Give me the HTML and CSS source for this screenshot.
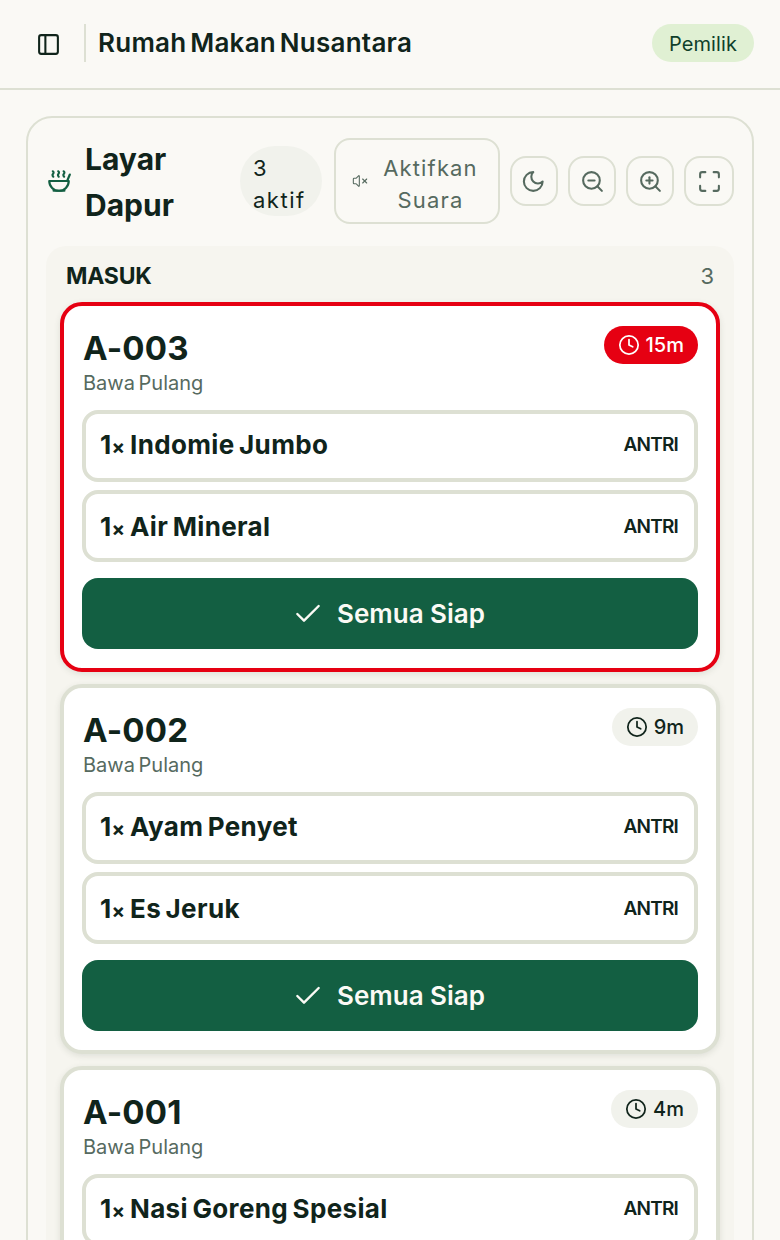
FILE: index.html
```html
<!DOCTYPE html>
<html lang="id">
<head>
<meta charset="utf-8">
<title>Layar Dapur</title>
<link rel="stylesheet" href="styles.css">
</head>
<body>
<svg class="sprite" aria-hidden="true">
  <symbol id="i-panel" viewBox="0 0 24 24"><rect x="3" y="3" width="18" height="18" rx="2"/><path d="M9 3v18"/></symbol>
  <symbol id="i-soup" viewBox="0 0 24 24"><path d="M12 21a9 9 0 0 0 9-9H3a9 9 0 0 0 9 9Z"/><path d="M7 21h10"/><path d="M19.5 12 22 6"/><path d="M16.25 3c.27.1.8.53.75 1.36-.06.83-.93 1.2-1 2.02-.05.78.34 1.24.73 1.62"/><path d="M11.25 3c.27.1.8.53.74 1.36-.05.83-.93 1.2-.98 2.02-.06.78.33 1.24.72 1.62"/><path d="M6.25 3c.27.1.8.53.75 1.36-.06.83-.93 1.2-1 2.02-.05.78.34 1.24.74 1.62"/></symbol>
  <symbol id="i-mute" viewBox="0 0 24 24"><path d="M11 4.702a.705.705 0 0 0-1.203-.498L6.413 7.587A1.4 1.4 0 0 1 5.416 8H3a1 1 0 0 0-1 1v6a1 1 0 0 0 1 1h2.416a1.4 1.4 0 0 1 .997.413l3.383 3.384A.705.705 0 0 0 11 19.298z"/><path d="M22 9l-6 6"/><path d="M16 9l6 6"/></symbol>
  <symbol id="i-moon" viewBox="1.2 0 24 24"><path d="M12 3a6 6 0 0 0 9 9 9 9 0 1 1-9-9Z"/></symbol>
  <symbol id="i-zoomout" viewBox="0 0 24 24"><circle cx="11" cy="11" r="8"/><path d="M21 21l-4.35-4.35"/><path d="M8 11h6"/></symbol>
  <symbol id="i-zoomin" viewBox="0 0 24 24"><circle cx="11" cy="11" r="8"/><path d="M21 21l-4.35-4.35"/><path d="M11 8v6"/><path d="M8 11h6"/></symbol>
  <symbol id="i-max" viewBox="0 0 24 24"><path d="M8 3H5a2 2 0 0 0-2 2v3"/><path d="M21 8V5a2 2 0 0 0-2-2h-3"/><path d="M3 16v3a2 2 0 0 0 2 2h3"/><path d="M16 21h3a2 2 0 0 0 2-2v-3"/></symbol>
  <symbol id="i-clock" viewBox="0 0 24 24"><circle cx="12" cy="12" r="10"/><path d="M12 6v6l4 2"/></symbol>
  <symbol id="i-check" viewBox="0 0 24 24"><path d="M20 6 9 17l-5-5"/></symbol>
</svg>
<div class="page">
  <header class="topbar">
    <div class="topbar-left">
      <button class="sidebar-toggle" type="button"><svg class="icon icon-25"><use href="#i-panel"/></svg></button>
      <span class="divider"></span>
      <h1 class="brand">Rumah Makan Nusantara</h1>
    </div>
    <span class="role">Pemilik</span>
  </header>
  <main class="main">
    <section class="panel">
      <div class="panel-head">
        <svg class="icon icon-soup"><use href="#i-soup"/></svg>
        <h2 class="panel-title">Layar Dapur</h2>
        <span class="count">3 aktif</span>
        <button class="sound" type="button"><svg class="icon icon-mute"><use href="#i-mute"/></svg><span class="sound-label">Aktifkan Suara</span></button>
        <button class="tool" type="button"><svg class="icon icon-25"><use href="#i-moon"/></svg></button>
        <button class="tool" type="button"><svg class="icon icon-25"><use href="#i-zoomout"/></svg></button>
        <button class="tool" type="button"><svg class="icon icon-25"><use href="#i-zoomin"/></svg></button>
        <button class="tool tool-wide" type="button"><svg class="icon icon-25"><use href="#i-max"/></svg></button>
      </div>
      <div class="column">
        <div class="column-head"><span class="column-name">MASUK</span><span class="column-count">3</span></div>
        <div class="cards">
          <article class="card card-late">
            <div class="card-head">
              <div class="order"><div class="order-no">A-003</div><div class="order-type">Bawa Pulang</div></div>
              <span class="timer timer-late"><svg class="icon icon-timer"><use href="#i-clock"/></svg>15m</span>
            </div>
            <div class="items">
              <div class="item"><span class="item-name">1<span class="times">×</span> Indomie Jumbo</span><span class="item-status">ANTRI</span></div>
              <div class="item"><span class="item-name">1<span class="times">×</span> Air Mineral</span><span class="item-status">ANTRI</span></div>
            </div>
            <button class="ready" type="button"><svg class="icon icon-check"><use href="#i-check"/></svg>Semua Siap</button>
          </article>
          <article class="card">
            <div class="card-head">
              <div class="order"><div class="order-no">A-002</div><div class="order-type">Bawa Pulang</div></div>
              <span class="timer"><svg class="icon icon-timer"><use href="#i-clock"/></svg>9m</span>
            </div>
            <div class="items">
              <div class="item"><span class="item-name">1<span class="times">×</span> Ayam Penyet</span><span class="item-status">ANTRI</span></div>
              <div class="item"><span class="item-name">1<span class="times">×</span> Es Jeruk</span><span class="item-status">ANTRI</span></div>
            </div>
            <button class="ready" type="button"><svg class="icon icon-check"><use href="#i-check"/></svg>Semua Siap</button>
          </article>
          <article class="card">
            <div class="card-head">
              <div class="order"><div class="order-no">A-001</div><div class="order-type">Bawa Pulang</div></div>
              <span class="timer"><svg class="icon icon-timer"><use href="#i-clock"/></svg>4m</span>
            </div>
            <div class="items">
              <div class="item"><span class="item-name">1<span class="times">×</span> Nasi Goreng Spesial</span><span class="item-status">ANTRI</span></div>
            </div>
          </article>
        </div>
      </div>
    </section>
  </main>
</div>
</body>
</html>
```
FILE: styles.css
```css
* { box-sizing: border-box; }
html, body { margin: 0; padding: 0; }
body {
  background: #faf9f5;
  color: #10241b;
  font-family: "Inter", "Liberation Sans", sans-serif;
}
button { font-family: inherit; background: none; border: 0; padding: 0; color: inherit; }
h1, h2 { margin: 0; }
.sprite { display: none; }
.page { width: 780px; height: 1240px; overflow: hidden; }

.icon { display: block; fill: none; stroke: currentColor; stroke-width: 2; stroke-linecap: round; stroke-linejoin: round; flex: none; }
.icon-25 { width: 25px; height: 25px; }
.icon-soup { width: 26px; height: 26px; color: #135f42; }
.icon-mute { width: 16px; height: 16px; stroke-width: 1.6; }
.icon-timer { width: 22px; height: 22px; stroke-width: 1.9; }
.icon-check { width: 32px; height: 32px; stroke-width: 1.8; }

.topbar {
  height: 90px;
  border-bottom: 2px solid #dde0d3;
  display: flex;
  align-items: center;
  justify-content: space-between;
  padding: 0 26px 2px 36px;
}
.topbar-left { display: flex; align-items: center; }
.sidebar-toggle { display: flex; width: 25px; height: 25px; margin-top: 2px; }
.divider { width: 2px; height: 38px; background: #dde0d3; margin: 0 12px 0 23px; }
.brand { font-size: 26px; line-height: 36px; font-weight: 600; letter-spacing: 0.25px; word-spacing: -3px; white-space: nowrap; }
.role {
  width: 102px; height: 38px;
  border-radius: 19px;
  background: #e0f0d3;
  color: #0f3f2b;
  font-size: 20px;
  line-height: 41px;
  letter-spacing: 0.1px;
  text-align: center;
}

.main { padding: 26px 26px 0; }
.panel { border: 2px solid #dde0d3; border-radius: 26px; padding: 19px 18px; height: 1200px; }
.panel-head { display: flex; align-items: center; height: 88px; }
.panel-head .icon-soup { margin-left: 0; margin-right: 13px; }
.panel-title { width: 155px; margin-top: 2px; font-size: 30px; line-height: 46px; font-weight: 700; }
.count {
  width: 82px; height: 70px;
  padding: 6px 13px;
  border-radius: 35px;
  background: #f1f2ec;
  font-size: 22px;
  line-height: 32px;
  letter-spacing: 1.5px;
}
.sound {
  width: 166px; height: 86px;
  margin: 0 10px 0 12px;
  border: 2px solid #dde0d3;
  border-radius: 16px;
  display: flex;
  align-items: center;
  padding: 0 16px;
  gap: 11px;
  color: #566a5f;
}
.sound-label { padding-top: 6px; font-size: 22px; line-height: 32px; text-align: center; letter-spacing: 1.15px; font-weight: 400; }
.tool {
  width: 48px; height: 50px;
  margin-right: 10px;
  border: 2px solid #dde0d3;
  border-radius: 16px;
  display: flex;
  align-items: center;
  justify-content: center;
  color: #566a5f;
  flex: none;
}
.tool-wide { width: 50px; margin-right: 0; }

.column { margin-top: 21px; background: #f6f5ef; border-radius: 20px; padding: 14px 14px 0; }
.column-head { display: flex; justify-content: space-between; align-items: center; height: 28px; padding: 6px 6px 2px; }
.column-name { font-size: 23px; font-weight: 700; letter-spacing: -0.2px; }
.column-count { font-size: 22px; color: #566a5f; }
.cards { display: flex; flex-direction: column; gap: 12px; margin-top: 14px; }

.card {
  height: 370px;
  padding: 20px 18px;
  background: #fff;
  border: 4px solid #dde0d3;
  border-radius: 22px;
  box-shadow: 0 2px 6px rgba(60, 70, 50, 0.12);
}
.card-late { border-color: #e60012; }
.card-head { display: flex; justify-content: space-between; align-items: flex-start; height: 84px; }
.order { padding-left: 1px; }
.order-no { font-size: 33px; line-height: 44px; font-weight: 700; letter-spacing: 0.2px; }
.order-type { font-size: 20px; line-height: 26px; color: #566a5f; word-spacing: -2px; }
.timer {
  display: flex; align-items: center; gap: 6px;
  height: 38px;
  padding: 0 14px;
  border-radius: 19px;
  background: #f1f2ec;
  font-size: 20px;
  font-weight: 500;
}
.timer-late { background: #e60012; color: #fff; }
.items { display: flex; flex-direction: column; gap: 8px; }
.item {
  height: 72px;
  padding: 0 16px 0 14px;
  border: 4px solid #dde0d3;
  border-radius: 16px;
  display: flex;
  align-items: center;
  justify-content: space-between;
  background: #fff;
}
.item + .item { padding-top: 4px; }
.item-name { font-size: 26px; line-height: 34px; font-weight: 700; word-spacing: -2px; letter-spacing: 0.35px; }
.times { font-size: 20px; }
.item-status { margin-bottom: 4px; font-size: 19px; font-weight: 600; letter-spacing: -0.8px; }
.ready {
  width: 100%;
  height: 71px;
  margin-top: 16px;
  padding-right: 3px;
  border-radius: 16px;
  background: #135f42;
  color: #fbfaf5;
  display: flex;
  align-items: center;
  justify-content: center;
  gap: 13px;
  font-size: 26px;
  font-weight: 600;
}
```
